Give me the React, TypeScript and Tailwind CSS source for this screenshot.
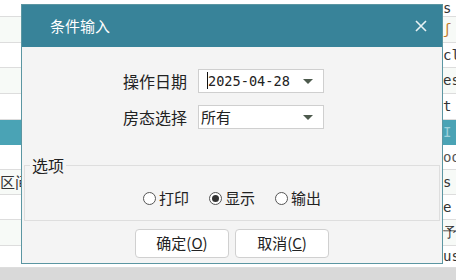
import React from "react";

const cjk = { fontFamily: '"Microsoft YaHei", "Noto Sans CJK SC", sans-serif' };

const bgRows = [
  { h: 17, t: "s", c: "text-[#333]" },
  { h: 26, t: "ʃ", c: "text-[#c0782a]" },
  { h: 25, t: "cl", c: "text-[#333]" },
  { h: 26, t: "es", c: "text-[#333]" },
  { h: 26, t: "t", c: "text-[#333]" },
  { h: 25, t: "I", c: "text-[#9fd0da]", teal: true },
  { h: 25, t: "oo", c: "text-[#555]" },
  { h: 25, t: "s", c: "text-[#333]", left: "区间" },
  { h: 25, t: "e", c: "text-[#333]" },
  { h: 26, t: "予", c: "text-[#333]" },
  { h: 22, t: "us", c: "text-[#333]" },
];

const Radio = ({ label, checked }: { label: string; checked?: boolean }) => (
  <label className="flex items-center gap-[3px] text-[15px] text-[#222]">
    <span className="flex h-[13px] w-[13px] items-center justify-center rounded-full border border-[#555] bg-white">
      {checked && <span className="h-[7px] w-[7px] rounded-full bg-[#333]" />}
    </span>
    <span>{label}</span>
  </label>
);

const Select = ({ children, mono }: { children: React.ReactNode; mono?: boolean }) => (
  <div className="flex h-[24px] w-[126px] items-center border border-[#cfcfcf] bg-white pl-[2px] pr-[10px]">
    <div
      className={`flex flex-1 items-center ${mono ? "pl-[6px] text-[13.6px]" : "text-[15px]"} text-[#222]`}
      style={mono ? { fontFamily: '"DejaVu Sans Mono", monospace' } : cjk}
    >
      {children}
    </div>
    <span className="h-0 w-0 border-x-[5px] border-t-[5px] border-x-transparent border-t-[#4d5a4d]" />
  </div>
);

export default function App() {
  return (
    <div className="relative h-[280px] w-[456px] overflow-hidden bg-white" style={cjk}>
      <div className="flex flex-col">
        {bgRows.map((r, i) => (
          <div
            key={i}
            style={{ height: r.h }}
            className={`flex items-center justify-between border-b ${r.teal ? "border-[#4aa3b5] bg-[#4aa3b5]" : i % 2 ? "border-[#dddddd] bg-[#f7faf7]" : "border-[#dddddd] bg-white"}`}
          >
            <span className="text-[15px] text-[#333]">{r.left ?? ""}</span>
            <span
              className={`w-[13px] overflow-hidden whitespace-nowrap text-[14px] ${r.c}`}
              style={{ fontFamily: '"DejaVu Sans Mono", monospace' }}
            >
              {r.t}
            </span>
          </div>
        ))}
        <div className="h-[12px] bg-[#d9d9d9]" />
      </div>

      <div className="absolute left-[21px] top-[4px] flex h-[260px] w-[422px] flex-col border border-[#5b96a2] bg-[#f4f4f4]">
        <div className="flex h-[42px] items-center justify-between bg-[#388399] pl-[28px] pr-[15px] text-white">
          <span className="text-[15px]">条件输入</span>
          <svg width="12" height="12" viewBox="0 0 12 12" stroke="#e8f2f4" strokeWidth="1.6">
            <path d="M1 1 L11 11 M11 1 L1 11" />
          </svg>
        </div>

        <div className="flex flex-col gap-[12px] pl-[79px] pt-[22px]">
          <div className="flex items-center gap-[11px]">
            <span className="w-[86px] text-right text-[16px] text-[#222]">操作日期</span>
            <Select mono>
              <span className="h-[17px] w-px bg-[#111]" />
              <span>2025-04-28</span>
            </Select>
          </div>
          <div className="flex items-center gap-[11px]">
            <span className="w-[86px] text-right text-[16px] text-[#222]">房态选择</span>
            <Select>所有</Select>
          </div>
        </div>

        <fieldset className="mx-[2px] mt-[26px] h-[66px] border border-[#dedede] px-0 pb-0">
          <legend className="ml-[5px] px-[2px] text-[16px] leading-[20px] text-[#222]">选项</legend>
          <div className="flex justify-center gap-[20px] pt-[12px]">
            <Radio label="打印" />
            <Radio label="显示" checked />
            <Radio label="输出" />
          </div>
        </fieldset>

        <div className="mt-[8px] flex justify-center gap-[6px]">
          {[
            ["确定", "O"],
            ["取消", "C"],
          ].map(([t, k]) => (
            <button
              key={k}
              className="flex h-[29px] w-[94px] items-center justify-center rounded-[4px] border border-[#d0d0d0] bg-white text-[15px] text-[#222]"
            >
              {t}(<span className="underline">{k}</span>)
            </button>
          ))}
        </div>
      </div>
    </div>
  );
}
